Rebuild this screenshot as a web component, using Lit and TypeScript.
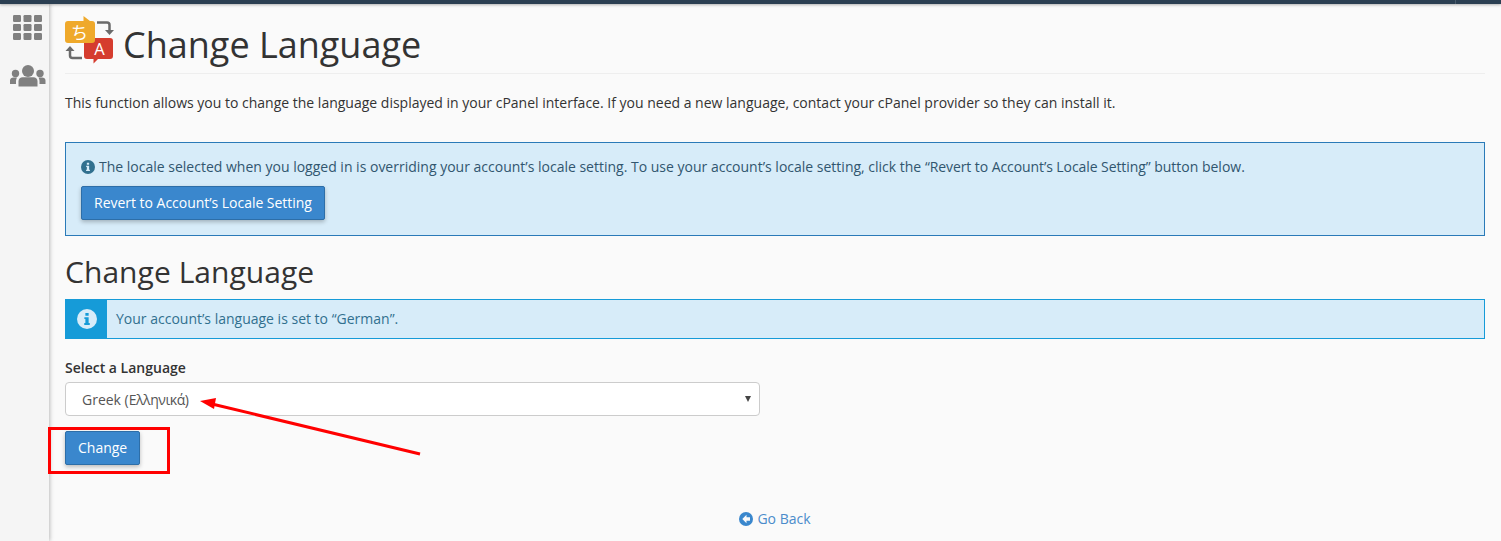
import { LitElement, html, css, svg } from "lit";
import { customElement } from "lit/decorators.js";

const infoIcon = (size: number, fill: string, glyph: string) => html`<svg width=${size} height=${size} viewBox="0 0 16 16"><circle cx="8" cy="8" r="8" fill=${fill}></circle>${svg`<path fill=${glyph} d="M6.7 3.200h2.600v2.100H6.700zM5.900 6.500h3.400v4.700h.9v1.500H5.800v-1.500h.9V8H5.900z"></path>`}</svg>`;

@customElement("app-root")
export class AppRoot extends LitElement {
  static styles = css`
    :host { display: block; position: relative; height: 541px; overflow: hidden; background: #fafafa; color: #333; font: 14px/20px "Open Sans", sans-serif; }
    .topbar { height: 4px; background: #2b3f52; box-shadow: 0 1px 3px rgba(0,0,0,.3); position: relative; z-index: 2; display: flex; justify-content: flex-end; }
    .topbar span { width: 45px; border-left: 1px solid #4a5c6c; }
    .shell { display: flex; height: 537px; }
    .side { width: 49px; flex: none; background: #f5f5f5; box-shadow: 1px 0 4px rgba(0,0,0,.25); display: flex; flex-direction: column; align-items: center; padding: 11px 0 0 6px; gap: 25px; box-sizing: border-box; }
    .side svg { display: block; }
    .main { flex: 1; padding: 0 16px 0 16px; min-width: 0; }
    .head { display: flex; height: 70px; border-bottom: 1px solid #eee; box-sizing: border-box; gap: 9px; }
    h1 { margin: 0; font-size: 36px; font-weight: 400; line-height: 40px; color: #333; padding-top: 21px; }
    .logo { margin-top: 12px; display: block; flex: none; }
    .intro { margin: 19px 0 0; line-height: 20px; }
    .alert { margin-top: 29px; height: 94px; box-sizing: border-box; border: 1px solid #2a7ab8; background: #d7ecf9; padding: 14px 15px; color: #31566f; }
    .alert .msg { display: flex; align-items: center; gap: 4px; }
    .q { letter-spacing: -0.08px; }
    .btn { font: 14px/20px "Open Sans", sans-serif; display: block; color: #fff; background: #3a87cd; border: 1px solid #2d6ea8; border-radius: 2px; padding: 6px 12px; height: 34px; box-sizing: border-box; box-shadow: 0 2px 4px rgba(0,0,0,.25); }
    .alert .btn { margin-top: 9px; width: 244px; padding: 6px 0; letter-spacing: -0.03px; }
    h2 { margin: 19px 0 0; font-size: 30px; font-weight: 400; line-height: 33px; color: #333; letter-spacing: 0.05px; }
    .note { margin-top: 11px; height: 40px; box-sizing: border-box; display: flex; align-items: stretch; border: 1px solid #169bd8; background: #d7ecf9; color: #31708f; }
    .note .ic { width: 41px; background: #169bd8; display: flex; align-items: center; justify-content: center; flex: none; }
    .note .tx { padding-left: 9px; align-self: center; }
    label { display: block; margin-top: 19px; font-weight: 600; color: #333; }
    .select { margin-top: 4px; width: 695px; height: 34px; box-sizing: border-box; border: 1px solid #ccc; border-radius: 4px; background: #fff; display: flex; align-items: center; justify-content: space-between; padding: 2px 8px 0 16px; color: #555; }
    .gr { letter-spacing: -0.45px; }
    .caret { width: 0; height: 0; border-left: 3px solid transparent; border-right: 3px solid transparent; border-top: 6px solid #444; margin-bottom: 2px; }
    .change { margin-top: 15px; }
    .back { margin-top: 44px; display: flex; justify-content: center; align-items: center; gap: 4px; color: #4a8ccb; }
    .mark { position: absolute; left: 48px; top: 427px; width: 122px; height: 47px; box-sizing: border-box; border: 3px solid #f00; }
    .arrow { position: absolute; left: 0; top: 0; pointer-events: none; }
  `;

  render() {
    return html`
      <div class="topbar"><span></span></div>
      <div class="shell">
        <nav class="side">
          <svg width="29" height="25" viewBox="0 0 29 25" fill="#808080">
            ${[0, 9, 18].map((y) => [0, 10.5, 21].map((x) => svg`<rect x=${x} y=${y} width="8" height="7" rx="1.2"></rect>`))}
          </svg>
          <svg width="36" height="22" viewBox="0 0 36 22" fill="#808080">
            <circle cx="18" cy="6" r="6"></circle>
            <path d="M8.500 21.500v-5.500c0-2.500 2-3.800 4-3.800h11c2 0 4 1.300 4 3.800v5.500z"></path>
            <circle cx="5.500" cy="8.500" r="3.700"></circle><circle cx="30" cy="8.500" r="3.700"></circle>
            <path d="M0 19v-3.500c0-2 1.500-3 3.500-3H7c-.6 1-1 2.200-1 3.500v3zM35.500 19v-3.500c0-2-1.500-3-3.500-3h-3.500c.6 1 1 2.200 1 3.500v3z"></path>
          </svg>
        </nav>
        <main class="main">
          <div class="head">
            <svg class="logo" width="49" height="49" viewBox="0 0 49 49">
              <path d="M32 6.500h10c1.500 0 2.500 1 2.500 2.500v6" fill="none" stroke="#6b6b6b" stroke-width="2.500"></path>
              <path d="M40 14h9l-4.500 5z" fill="#6b6b6b"></path>
              <path d="M5 34v5.500c0 1.500 1 2.500 2.500 2.500H17" fill="none" stroke="#6b6b6b" stroke-width="2.500"></path>
              <path d="M0.500 35 5 30l4.500 5z" fill="#6b6b6b"></path>
              <path d="M22 22h23c2 0 3 1 3 3v15c0 2-1 3-3 3H33l-4.500 4.500V43H22c-2 0-3-1-3-3V25c0-2 1-3 3-3z" fill="#d53c2e"></path>
              <path d="M3 5h15.500V0l6.500 5h2c2 0 3 1 3 3v16c0 2-1 3-3 3H3c-2 0-3-1-3-3V8c0-2 1-3 3-3z" fill="#efa92b"></path>
              <text x="14.500" y="23" font-size="17" fill="#fff" text-anchor="middle" font-family="Noto Sans CJK JP, sans-serif">ち</text>
              <text x="34.500" y="39" font-size="16.500" fill="#fff" text-anchor="middle" font-family="Open Sans, sans-serif">A</text>
            </svg>
            <h1>Change Language</h1>
          </div>
          <p class="intro">This function allows you to change the language displayed in your cPanel interface. If you need a new language, contact your cPanel provider so they can install it.</p>
          <div class="alert">
            <div class="msg">${infoIcon(14, "#31708f", "#d7ecf9")}<span>The locale selected when you logged in is overriding your account’s locale setting. To use your account’s locale setting, click the <span class="q">“Revert to Account’s Locale Setting”</span> button below.</span></div>
            <button class="btn">Revert to Account’s Locale Setting</button>
          </div>
          <h2>Change Language</h2>
          <div class="note">
            <div class="ic">${infoIcon(20, "#d7ecf9", "#169bd8")}</div>
            <div class="tx">Your account’s language is set to “German”.</div>
          </div>
          <label>Select a Language</label>
          <div class="select"><span>Greek (<span class="gr">Ελληνικά</span>)</span><span class="caret"></span></div>
          <button class="btn change">Change</button>
          <div class="back">
            <svg width="14" height="14" viewBox="0 0 14 14"><circle cx="7" cy="7" r="7" fill="#3a87cd"></circle><path d="M7.500 2.800 3.300 7l4.200 4.200V8.700h3.500V5.300H7.500z" fill="#fafafa"></path></svg>
            <span>Go Back</span>
          </div>
        </main>
      </div>
      <div class="mark"></div>
      <svg class="arrow" width="1501" height="541">
        <line x1="420" y1="454" x2="212" y2="404" stroke="#f00" stroke-width="3"></line>
        <path d="M200 401 216 398 214 409z" fill="#f00"></path>
      </svg>
    `;
  }
}
